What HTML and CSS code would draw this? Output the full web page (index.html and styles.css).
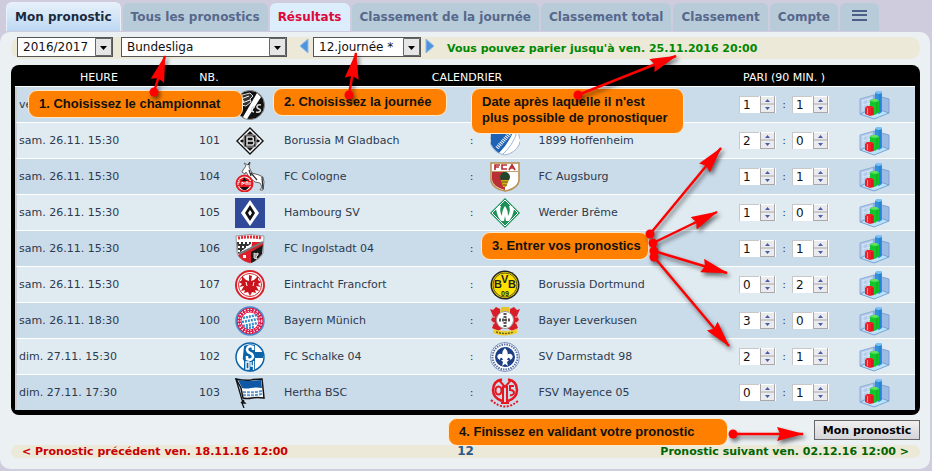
FILE: index.html
```html
<!DOCTYPE html>
<html lang="fr">
<head>
<meta charset="utf-8">
<title>Mon pronostic</title>
<link rel="stylesheet" href="styles.css">
</head>
<body>
<svg class="defs" aria-hidden="true">
  <symbol id="chart" viewBox="0 0 31 30">
    <path d="M1 9 15 5 15 20 1 24z" fill="#b4cdea" stroke="#8fadd6"/>
    <path d="M15 5 30 9 30 23 15 20z" fill="#9dbce5" stroke="#7ea2d4"/>
    <path d="M1 24 15 18 30 23 15 29z" fill="#b9e4fa" stroke="#7aa3d6"/>
    <path d="M3 11 13 8M3 15 13 13M4 10v11M9 9v12" stroke="#d5e5f6" fill="none"/>
    <path d="M16 3 18 1h4l1 2v19l-3 2-4-2z" fill="#2f90e0"/><path d="M16 3 18 1h4l1 2-3 1z" fill="#7fc3f5"/><path d="M21 4v18" stroke="#1f78cc"/>
    <path d="M11 11 13 9h5l2 2v11l-4 3-5-2z" fill="#14c52c"/><path d="M11 11 13 9h5l2 2-4 1z" fill="#5fe065"/><path d="M18 12v11" stroke="#0da524"/>
    <path d="M6 18 8 16h5l2 2v7l-4 1-5-2z" fill="#f0202a"/><path d="M8.500 18v6" stroke="#ff9a9a"/><path d="M13 18v7" stroke="#c80a16"/>
  </symbol>
</svg>

<div class="page">
<nav class="tabs">
  <a class="tab current" href="#">Mon pronostic</a>
  <a class="tab" href="#">Tous les pronostics</a>
  <a class="tab results" href="#">Résultats</a>
  <a class="tab" href="#">Classement de la journée</a>
  <a class="tab" href="#">Classement total</a>
  <a class="tab" href="#">Classement</a>
  <a class="tab" href="#">Compte</a>
  <a class="tab menu" href="#" aria-label="Menu"><svg width="15" height="11" viewBox="0 0 15 11"><path d="M0 1h15M0 5h15M0 10h15" stroke="#4c5f86" stroke-width="2"/></svg></a>
</nav>

<main class="panel">
  <form class="content">
  <div class="filters">
    <select class="season" aria-label="Saison"><option>2016/2017</option></select>
    <select class="league" aria-label="Championnat"><option>Bundesliga</option></select>
    <a class="step" href="#" aria-label="Journée précédente"><svg width="10" height="16" viewBox="0 0 10 16"><path d="M9 1v14L1 8z" fill="#4f93dc" stroke="#8fbbe8"/></svg></a>
    <select class="round" aria-label="Journée"><option>12.journée *</option></select>
    <a class="step" href="#" aria-label="Journée suivante"><svg width="10" height="16" viewBox="0 0 10 16"><path d="M1 1v14L9 8z" fill="#4f93dc" stroke="#8fbbe8"/></svg></a>
    <strong class="deadline">Vous pouvez parier jusqu'à ven. 25.11.2016 20:00</strong>
  </div>

  <div class="board">
  <table class="games">
    <colgroup><col class="c-time"><col class="c-nb"><col class="c-home-logo"><col><col class="c-sep"><col class="c-away-logo"><col><col class="c-bet"><col class="c-stat"></colgroup>
    <thead><tr><th>HEURE</th><th>NB.</th><th colspan="5" class="calendar">CALENDRIER</th><th>PARI (90 MIN. )</th><th></th></tr></thead>
    <tbody>
    <tr>
      <td>ven.</td><td></td>
      <td><svg class="logo" viewBox="0 0 30 30"><circle cx="15" cy="15" r="14.5" fill="#111" stroke="#888"/><path d="M22 3 8 27A14 14 0 0 0 12 29L26 7z" fill="#fff"/><path d="M7 5l8-2 3 3-3 3 1 3-5 4-5-1 3-4-4-2z" fill="#333" stroke="#ddd"/><path d="M6 9l8-3M7 13l8-3" stroke="#fff"/><path d="M20 17c-4-1-5 4-1 5M26 15c-5-1-5 3-2 4s1 4-3 3" fill="none" stroke="#ddd" stroke-width="1.5"/></svg></td>
      <td></td><td></td><td></td><td></td>
      <td class="bet"><input type="number" value="1" aria-label="Buts domicile"><span>:</span><input type="number" value="1" aria-label="Buts extérieur"></td>
      <td><a href="#" aria-label="Statistiques"><svg class="chart"><use href="#chart"/></svg></a></td>
    </tr>
    <tr>
      <td>sam. 26.11. 15:30</td><td class="nb">101</td>
      <td><svg class="logo" viewBox="0 0 30 30"><path d="M15 1 29 15 15 29 1 15z" fill="#111"/><path d="M15 4 26 15 15 26 4 15z" fill="none" stroke="#fff" stroke-width="1.5"/><path d="M5 13h20M5 17h20" stroke="#fff"/><path d="M9 9h12v12H9z" fill="#111" stroke="#bbb"/><path d="M12 11h5q2 0 1 4 2 1 0 4h-6zM12 15h6" fill="none" stroke="#ddd" stroke-width="1.5"/></svg></td>
      <td>Borussia M Gladbach</td><td class="sep">:</td>
      <td><svg class="logo" viewBox="0 0 30 30"><path d="M1 1h28v9q3 4 0 9-4 8-14 10Q4 27 1 19q-2-4 0-9z" fill="#fff" stroke="#9eb6d5"/><path d="M1 10V1h24Q20 16 9 27q-6-4-8-9z" fill="#1d62b5"/><path d="M7 22 22 5" stroke="#fff" stroke-width="4" stroke-dasharray="1 1"/><path d="M13 28Q23 19 27 6" fill="none" stroke="#9eb6d5"/></svg></td>
      <td>1899 Hoffenheim</td>
      <td class="bet"><input type="number" value="2" aria-label="Buts domicile"><span>:</span><input type="number" value="0" aria-label="Buts extérieur"></td>
      <td><a href="#" aria-label="Statistiques"><svg class="chart"><use href="#chart"/></svg></a></td>
    </tr>
    <tr>
      <td>sam. 26.11. 15:30</td><td class="nb">104</td>
      <td><svg class="logo" viewBox="0 0 30 30"><path d="M8 8 11 4 9 1l4 2 2-2-1 4 3 6 7 2 4 2 1 5-1 8-3 0 2-3-2-4-5-1-6-5-3-5-1 2-3-2z" fill="#fff" stroke="#666"/><path d="M13 3l2-3M16 11l6 7M27 15l1 12M14 8l2 6" stroke="#333" stroke-width="1.3"/><circle cx="9.5" cy="21.5" r="8" fill="#fff" stroke="#e31b23" stroke-width="2"/><circle cx="9.5" cy="21.5" r="6" fill="#e31b23"/><path d="M2 19h15v5H2z" fill="#e31b23"/><path d="M6 19l2-1 1-3 2 3 3 1zM5 25h9l-3 3H8z" fill="#111"/><path d="M3 23v-3h2M7 23v-3l2 2v-2M11 23v-3h2v3M15 23v-3" stroke="#fff" fill="none"/></svg></td>
      <td>FC Cologne</td><td class="sep">:</td>
      <td><svg class="logo" viewBox="0 0 30 30"><path d="M1 1h28v18q-2 8-14 10Q3 27 1 19z" fill="#fff" stroke="#b98d4b" stroke-width="1.5"/><path d="M2 10h13v18Q3 25 2 18z" fill="#ba2f34"/><path d="M2 9.5h26" stroke="#c0a070"/><path d="M5 8V3h5M5 5h4M17 3h-5v4h5M19 8l3-5 3 5M20 6h4" fill="none" stroke="#ba2f34" stroke-width="1.7"/><circle cx="15" cy="15" r="5" fill="#24452c"/><path d="M11 18h8l-3 7h-3z" fill="#d6ae20"/><path d="M12 20h6M13 23h4" stroke="#635515"/></svg></td>
      <td>FC Augsburg</td>
      <td class="bet"><input type="number" value="1" aria-label="Buts domicile"><span>:</span><input type="number" value="1" aria-label="Buts extérieur"></td>
      <td><a href="#" aria-label="Statistiques"><svg class="chart"><use href="#chart"/></svg></a></td>
    </tr>
    <tr>
      <td>sam. 26.11. 15:30</td><td class="nb">105</td>
      <td><svg class="logo" viewBox="0 0 30 30"><path d="M0 0h30v30H0z" fill="#304999"/><path d="M15 2 24 15 15 28 6 15z" fill="#fff"/><path d="M15 7 20 15 15 23 10 15z" fill="#111"/><path d="M15 12 17 15 15 18 13 15z" fill="#fff"/></svg></td>
      <td>Hambourg SV</td><td class="sep">:</td>
      <td><svg class="logo" viewBox="0 0 30 30"><path d="M15 0 30 15 15 30 0 15z" fill="#1b9158"/><path d="M15 2 28 15 15 28 2 15z" fill="none" stroke="#fff"/><path d="M6 11q2-4 5-3-2 5 1 10 0-6 3-10 3 4 3 10 3-5 1-10 3-1 5 3-1 7-5 12h-3l-1-5-1 5h-3Q7 18 6 11z" fill="#fff"/></svg></td>
      <td>Werder Brême</td>
      <td class="bet"><input type="number" value="1" aria-label="Buts domicile"><span>:</span><input type="number" value="0" aria-label="Buts extérieur"></td>
      <td><a href="#" aria-label="Statistiques"><svg class="chart"><use href="#chart"/></svg></a></td>
    </tr>
    <tr>
      <td>sam. 26.11. 15:30</td><td class="nb">106</td>
      <td><svg class="logo" viewBox="0 0 30 30"><path d="M1 2q14-3 28 0l-1 17q-3 7-13 10Q4 26 2 19z" fill="#fff" stroke="#999"/><path d="M3 4q12-2 24 0" fill="none" stroke="#e32632" stroke-width="3" stroke-dasharray="2 1"/><path d="M2 8h16L3 20z" fill="#333"/><path d="M4 9h13M3 13h11M3 17h7" stroke="#fff" stroke-dasharray="2 2" stroke-width="2"/><path d="M17 8h11l0 4-12 6z" fill="#df1e2b"/><path d="M3 21 18 13v14l-3 2Q5 26 3 21z" fill="#df1e2b"/><path d="M16 18 28 11l-1 9q-4 6-11 9z" fill="#191919"/><path d="M4 20 28 8" stroke="#777" stroke-width="2"/><path d="M19 19l2 1 2-1 0 2-2 2 1 2-3-1z" stroke="#ddd" fill="#999"/><path d="M8 21h3v3H8z" fill="#fff"/></svg></td>
      <td>FC Ingolstadt 04</td><td class="sep">:</td>
      <td></td>
      <td></td>
      <td class="bet"><input type="number" value="1" aria-label="Buts domicile"><span>:</span><input type="number" value="1" aria-label="Buts extérieur"></td>
      <td><a href="#" aria-label="Statistiques"><svg class="chart"><use href="#chart"/></svg></a></td>
    </tr>
    <tr>
      <td>sam. 26.11. 15:30</td><td class="nb">107</td>
      <td><svg class="logo" viewBox="0 0 30 30"><circle cx="15" cy="15" r="14" fill="#fff" stroke="#d8222b" stroke-width="2"/><circle cx="15" cy="15" r="11.5" fill="none" stroke="#d8222b"/><path d="M14 5l3 1-1 5 3-1 4-4 0 4 3 2-3 2 3 3-5-1 3 5-4-1 1 3-4-1-2 4-2-4-4 1 1-3-4 1 3-5-5 1 3-3-3-2 3-2 0-4 4 4 3 1z" fill="#c9141e"/><path d="M11 12l1 4M19 12l-1 4" stroke="#fff"/></svg></td>
      <td>Eintracht Francfort</td><td class="sep">:</td>
      <td><svg class="logo" viewBox="0 0 30 30"><circle cx="15" cy="15" r="14.5" fill="#222"/><circle cx="15" cy="15" r="13" fill="#fde100"/><circle cx="15" cy="15" r="12" fill="none" stroke="#222" stroke-width=".7"/><text x="4" y="18" font-size="11" class="crest">B</text><text x="11" y="13" font-size="11" class="crest">V</text><text x="18" y="18" font-size="11" class="crest">B</text><text x="11" y="26" font-size="7" class="crest">09</text></svg></td>
      <td>Borussia Dortmund</td>
      <td class="bet"><input type="number" value="0" aria-label="Buts domicile"><span>:</span><input type="number" value="2" aria-label="Buts extérieur"></td>
      <td><a href="#" aria-label="Statistiques"><svg class="chart"><use href="#chart"/></svg></a></td>
    </tr>
    <tr>
      <td>sam. 26.11. 18:30</td><td class="nb">100</td>
      <td><svg class="logo" viewBox="0 0 30 30"><circle cx="15" cy="15" r="14" fill="#dc1545" stroke="#4b8ccd" stroke-width="1.5"/><circle cx="15" cy="15" r="10.8" fill="none" stroke="#fff" stroke-width="3" stroke-dasharray="1.5 1.5"/><circle cx="15" cy="15" r="10.8" fill="none" stroke="#dc1545" stroke-width="1"/><circle cx="15" cy="15" r="8.5" fill="#fff"/><path d="M8 12l14-3M7 16l16-3M8 20l15-3M11 22l9-1" stroke="#368ccc" stroke-width="2.5" stroke-dasharray="2 1"/></svg></td>
      <td>Bayern Münich</td><td class="sep">:</td>
      <td><svg class="logo" viewBox="0 0 30 30"><path d="M0 3l3 1 3-3 4 2 0 4 3 3v12l-5 3-6-3 2-5-3-3 2-4zM30 3l-3 1-3-3-4 2 0 4-3 3v12l5 3 6-3-2-5 3-3-2-4z" fill="#d91d28"/><path d="M1 11h4M1 17h4M25 11h4M25 17h4" stroke="#f3b9bd"/><path d="M11 1h8l1 5H10z" fill="#e6c32b"/><circle cx="15" cy="14" r="8.5" fill="#fff" stroke="#999"/><path d="M9 14h12M15 7v14" stroke="#555" stroke-width="3" stroke-dasharray="2 1"/><path d="M3 23q12 4 24 0v4q-12 5-24 0z" fill="#f0d22d"/><path d="M6 26q9 3 18 0" fill="none" stroke="#6d5f17" stroke-dasharray="2 1" stroke-width="1.5"/></svg></td>
      <td>Bayer Leverkusen</td>
      <td class="bet"><input type="number" value="3" aria-label="Buts domicile"><span>:</span><input type="number" value="0" aria-label="Buts extérieur"></td>
      <td><a href="#" aria-label="Statistiques"><svg class="chart"><use href="#chart"/></svg></a></td>
    </tr>
    <tr>
      <td>dim. 27.11. 15:30</td><td class="nb">102</td>
      <td><svg class="logo" viewBox="0 0 30 30"><circle cx="15" cy="15" r="14" fill="#fff" stroke="#0b63a9" stroke-width="1.5"/><path d="M9 4q6-3 11-1v26q-6 1-11-1V19q-2-2-1-5z" fill="#0b63a9"/><path d="M20 10h8v6h-8z" fill="#0b63a9"/><path d="M18 8V5q-5-2-6 2 0 3 3 4t3 4q-1 4-6 2v-3" fill="none" stroke="#fff" stroke-width="2.5"/><path d="M11 20h3v7h-3zM16 20v4h3M18.500 19v9" fill="none" stroke="#fff" stroke-width="1.3"/></svg></td>
      <td>FC Schalke 04</td><td class="sep">:</td>
      <td><svg class="logo" viewBox="0 0 30 30"><circle cx="15" cy="15" r="14.5" fill="#fff" stroke="#7b91bd"/><circle cx="15" cy="15" r="12.5" fill="none" stroke="#5872a8" stroke-width="2" stroke-dasharray="1.5 1"/><circle cx="15" cy="15" r="10" fill="#1c3e85"/><path d="M15 6q5 5 1 10 1-5 5-4 4 3-1 6 0-3-2-2l-1 2 2 0-2 2 1 4-3-2-3 2 1-4-2-2 2 0-1-2q-2-1-2 2-5-3-1-6 4-1 5 4-4-5 1-10z" fill="#fff"/></svg></td>
      <td>SV Darmstadt 98</td>
      <td class="bet"><input type="number" value="2" aria-label="Buts domicile"><span>:</span><input type="number" value="1" aria-label="Buts extérieur"></td>
      <td><a href="#" aria-label="Statistiques"><svg class="chart"><use href="#chart"/></svg></a></td>
    </tr>
    <tr>
      <td>dim. 27.11. 17:30</td><td class="nb">103</td>
      <td><svg class="logo" viewBox="0 0 30 30"><path d="M1 1q9 2 15 1 5-1 11-1l1 9 1 10q-7-1-12 0-5 1-9 0L6 10z" fill="#fff" stroke="#111" stroke-width="1.5"/><path d="M3 2q8 1 13 1 5-1 10-1l1 8q-6-1-11 0-5 1-9 0z" fill="#0e58a6"/><path d="M8 14q9 1 19-1M8 17q9 1 19-1" stroke="#5e96d0" stroke-width="2" stroke-dasharray="3 1" fill="none"/><path d="M1 1l6 21 3 3-3 0 2 5M6 25l3-3" fill="none" stroke="#111" stroke-width="1.3"/></svg></td>
      <td>Hertha BSC</td><td class="sep">:</td>
      <td><svg class="logo" viewBox="0 0 30 30"><g fill="none" stroke="#e8171f"><path d="M12 1.500Q3 3 3 12q0 8 9 11M18 1.500Q27 3 27 12q0 8-9 11" stroke-width="2.500"/><ellipse cx="8.500" cy="12.500" rx="3" ry="4" stroke-width="2"/><path d="M9 2l6 7 6-7M13 8v17M17 8v17M11 25h8" stroke-width="2"/><path d="M24 8h-4v4q4 0 4 3-1 3-4 2" stroke-width="2"/><path d="M1 22q14 13 28 0" stroke-width="2" stroke-dasharray="2 1.500"/></g></svg></td>
      <td>FSV Mayence 05</td>
      <td class="bet"><input type="number" value="0" aria-label="Buts domicile"><span>:</span><input type="number" value="1" aria-label="Buts extérieur"></td>
      <td><a href="#" aria-label="Statistiques"><svg class="chart"><use href="#chart"/></svg></a></td>
    </tr>
    </tbody>
  </table>
  </div>

  <div class="actions"><button type="submit">Mon pronostic</button></div>
  <div class="pager">
    <a class="prev" href="#">&lt; Pronostic précédent ven. 18.11.16 12:00</a>
    <span class="page-no">12</span>
    <a class="next" href="#">Pronostic suivant ven. 02.12.16 12:00 &gt;</a>
  </div>
  </form>
</main>

<div class="note note-league">1. Choisissez le championnat</div>
<div class="note note-round">2. Choisissez la journée</div>
<div class="note note-date">Date après laquelle il n'est<br>plus possible de pronostiquer</div>
<div class="note note-bets">3. Entrer vos pronostics</div>
<div class="note note-submit">4. Finissez en validant votre pronostic</div>
<svg class="arrows" width="932" height="471" viewBox="0 0 932 471" aria-hidden="true">
  <defs><marker id="head" viewBox="0 0 27 14" refX="26" refY="7" markerWidth="27" markerHeight="14" markerUnits="userSpaceOnUse" orient="auto"><path d="M27 7 0 0 3 7 0 14z" fill="#f00"/></marker>
  <marker id="dot" viewBox="0 0 10 10" refX="5" refY="5" markerWidth="10" markerHeight="10" markerUnits="userSpaceOnUse"><circle cx="5" cy="5" r="4.5" fill="#f00"/></marker></defs>
  <g class="lines">
    <path d="M154 92 165 56"/><path d="M349 95 356 53"/><path d="M578 95 676 56"/>
    <path d="M650 234 721 148"/><path d="M653 243 717 212"/><path d="M654 251 727 273"/><path d="M654 257 729 346"/>
    <path d="M733 434 803 434"/>
  </g>
</svg>
</div>
</body>
</html>
```
FILE: styles.css
```css
* { box-sizing: border-box; }
body { margin: 0; background: #cfccdd; color: #2d3a4d; font: 11px/14px "DejaVu Sans", Verdana, sans-serif; }
a { color: inherit; text-decoration: none; }
.defs { position: absolute; width: 0; height: 0; }
.page { position: relative; padding: 2px 2px 3px 0; }

.tabs { display: flex; align-items: flex-end; gap: 2px; height: 29px; padding-left: 6px; }
.tab { height: 28px; padding: 0 8px; line-height: 28px; border-radius: 6px 6px 0 0; background: #b8cbd9; color: #56688c; font-size: 12px; font-weight: bold; white-space: nowrap; }
.tab.current { height: 29px; border: 1px solid #e9f2fb; border-bottom: 0; background: linear-gradient(#e6f0fa, #d3e5f6 50%, #bcd8f3); color: #1c2a3e; }
.tab.results { background: #dceefb; color: #dc0a3c; }
.tab.menu { padding: 0 12px; }

.panel { margin-top: 1px; padding: 5px 10px 11px 11px; border-radius: 10px; background: #ebf0f3; }
.filters { display: flex; align-items: flex-start; height: 22px; padding-left: 6px; border-radius: 10px; background: #ece9d8; }
select { appearance: none; height: 20px; padding: 0 22px 0 5px; border: 1px solid #555; border-radius: 0; color: #111; font: 12px "DejaVu Sans", Verdana, sans-serif;
  background: url("data:image/svg+xml,%3Csvg xmlns='http://www.w3.org/2000/svg' width='17' height='18'%3E%3Cpath d='M.5.5h16v17H.5z' fill='%23e6e6e6' stroke='%23666'/%3E%3Cpath d='M5 8h7l-3.500 4z' fill='%23000'/%3E%3C/svg%3E") right center no-repeat #fff; }
.season { width: 96px; margin-right: 8px; }
.league { width: 166px; margin-right: 12px; }
.round { width: 108px; margin: 0 4px; }
.step { height: 18px; padding-top: 1px; }
.deadline { margin-left: 12px; line-height: 24px; color: #080; }

.board { margin-top: 6px; padding: 0 5px 5px 4px; border-radius: 8px; background: #000; }
.games { width: 100%; table-layout: fixed; border-spacing: 0; }
.c-time { width: 168px; } .c-nb { width: 52px; } .c-home-logo { width: 49px; } .c-sep { width: 26px; }
.c-away-logo { width: 54px; } .c-bet { width: 142px; } .c-stat { width: 60px; }
th { height: 22px; padding: 4px 0 0; border-bottom: 1px solid #fff; color: #fff; font-weight: normal; }
.calendar { padding-right: 14px; }
td { height: 36px; padding: 0; border-bottom: 1px solid #fff; background: #cadbea; white-space: nowrap; }
tr:nth-child(even) td { background: #e0ebf1; }
tr:last-child td { height: 35px; border-bottom: 0; }
td:first-child { padding-left: 2px; border-left: 2px solid #c9ccd0; }
td:nth-child(6) { padding-left: 5px; }
td:last-child { padding-left: 4px; }
.nb { padding-right: 15px; text-align: right; }
.sep { text-align: center; }
.logo { display: block; width: 30px; height: 30px; }
.chart { display: block; width: 31px; height: 30px; }
.crest { font-family: "Liberation Sans", Arial, sans-serif; font-weight: bold; fill: #222; }
.bet { text-align: center; }
.bet span { display: inline-block; width: 16px; }
.bet input { appearance: textfield; width: 37px; height: 17px; padding: 0 0 0 4px; border: 0; background: #fff; color: #111; font: 12px "DejaVu Sans", Verdana, sans-serif; vertical-align: middle; box-shadow: inset 1px 1px #c8c8c8; }
.bet input::-webkit-inner-spin-button { appearance: none; opacity: 1; width: 17px; height: 17px; margin: 0;
  background: url("data:image/svg+xml,%3Csvg xmlns='http://www.w3.org/2000/svg' width='17' height='17'%3E%3Cpath d='M0 0h17v17H0z' fill='%23fff'/%3E%3Cpath d='M1 1h14v15H1z' fill='%23ebebee'/%3E%3Cpath d='M1.500 0v17M15.500 0v17M1 8h15M1 16.500h15' stroke='%23a9a9ad' fill='none'/%3E%3Cpath d='M6 6h5L8.500 3zM6 11h5l-2.500 3z' fill='%23475da8'/%3E%3C/svg%3E"); }

.actions { display: flex; justify-content: flex-end; padding: 5px 0; }
button { width: 106px; height: 20px; padding: 0; border: 1px solid #666; background: linear-gradient(#f0f0f0, #d5d5d9); color: #000; font: bold 11px "DejaVu Sans", Verdana, sans-serif; }
.pager { display: grid; grid-template-columns: 1fr auto 1fr; padding: 0 11px; border-radius: 7px; background: #ece9d8; font-weight: bold; line-height: 13px; }
.prev { color: #c80000; }
.page-no { color: #2a5a88; font-size: 12px; }
.next { color: #006400; text-align: right; }

.note { position: absolute; padding: 5px 10px; border: 1px solid #ffe9c8; border-radius: 9px; background: #ff8000; color: #111; font: bold 13px/16px "Liberation Sans", Arial, sans-serif; white-space: nowrap; }
.note-league { left: 28px; top: 90px; width: 215px; }
.note-round { left: 273px; top: 88px; width: 174px; }
.note-date { left: 471px; top: 88px; width: 213px; padding-bottom: 7px; }
.note-bets { left: 481px; top: 232px; width: 168px; }
.note-submit { left: 448px; top: 418px; width: 280px; }
.arrows { position: absolute; left: 0; top: 0; pointer-events: none; filter: drop-shadow(2px 3px 2px rgba(0, 0, 0, .55)); }
.lines path { fill: none; stroke: #f00; stroke-width: 2.5; marker-start: url(#dot); marker-end: url(#head); }
```
